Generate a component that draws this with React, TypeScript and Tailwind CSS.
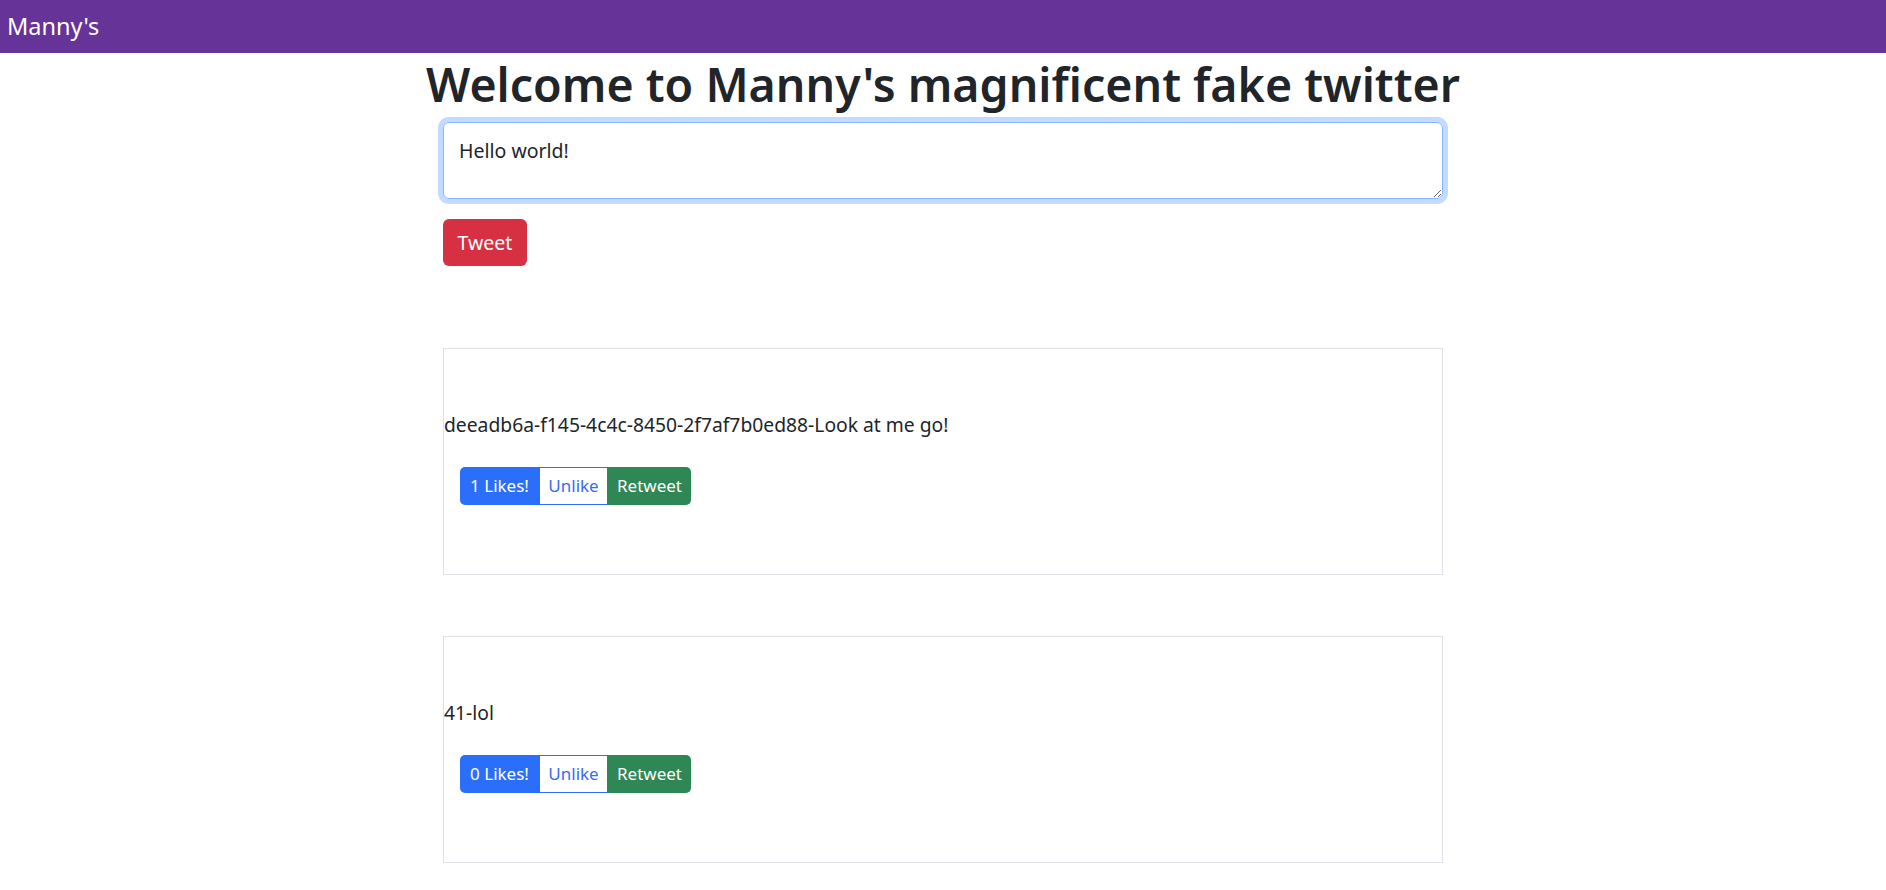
import React from 'react';

const tweets = [
  { id: 'deeadb6a-f145-4c4c-8450-2f7af7b0ed88', text: 'Look at me go!', likes: 1 },
  { id: '41', text: 'lol', likes: 0 },
];

const App: React.FC = () => {
  return (
    <div className="min-h-screen bg-white text-[#212529] font-['Noto_Sans',sans-serif]">
      <nav className="h-[53px] bg-[#663399] flex items-center px-[7px]">
        <span className="text-white text-[23.5px] leading-none">Manny's</span>
      </nav>

      <h1 className="text-center text-[46.5px] leading-[60px] font-semibold mt-px">
        Welcome to Manny's magnificent fake twitter
      </h1>

      <div className="w-[1000px] mx-auto">
        <textarea
          className="block mt-[8px] w-full h-[77px] rounded-[6px] border border-[#86b7fe] shadow-[0_0_0_5px_#c2dbfe] px-[15px] pt-[13px] text-[19.5px] leading-[30px] text-[#212529] outline-none"
          defaultValue="Hello world!"
        />

        <button className="mt-[20px] w-[84px] h-[47px] rounded-[6px] bg-[#d63042] text-white text-[19.5px]">
          Tweet
        </button>

        <div className="mt-[82px] flex flex-col gap-[61px]">
          {tweets.map((t) => (
            <div key={t.id} className="h-[227px] border border-[#dee2e6] pt-[61px]">
              <p className="text-[19.3px] leading-[30px]">
                {t.id}-{t.text}
              </p>
              <div className="mt-[27px] ml-[16px] inline-flex h-[38px] text-[17px] rounded-[5px] overflow-hidden">
                <button className="w-[79px] bg-[#2b6ef9] text-white">{t.likes} Likes!</button>
                <button className="w-[69px] bg-white text-[#3a6cf5] border border-[#2b6ef9]">Unlike</button>
                <button className="w-[83px] bg-[#308756] text-white">Retweet</button>
              </div>
            </div>
          ))}
        </div>
      </div>
    </div>
  );
};

export default App;
